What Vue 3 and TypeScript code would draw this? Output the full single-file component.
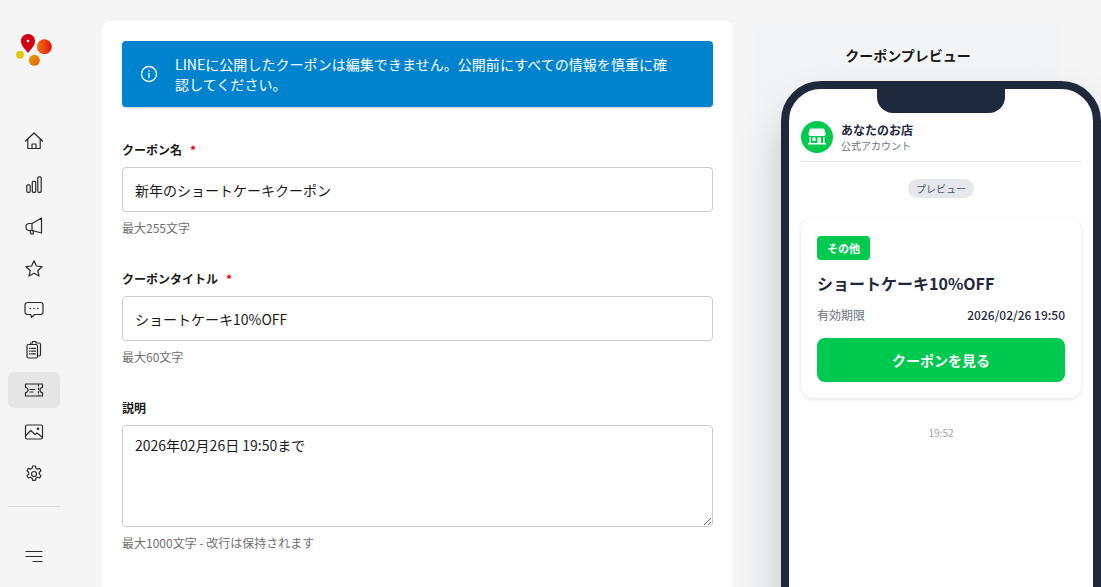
<script setup lang="ts">
// dy nudges each glyph inside its 36px row
const navItems = [
  { id: "home", active: false, dy: 0 },
  { id: "chart", active: false, dy: 2.3 },
  { id: "megaphone", active: false, dy: 3.5 },
  { id: "star", active: false, dy: 4 },
  { id: "chat", active: false, dy: 5 },
  { id: "clipboard", active: false, dy: 0.5 },
  { id: "ticket", active: true, dy: 0 },
  { id: "image", active: false, dy: 0 },
  { id: "gear", active: false, dy: 2 },
];
</script>

<template>
  <div class="page">
    <aside class="sidebar">
      <div class="logo">
        <svg width="40" height="40" viewBox="0 0 40 40">
          <defs>
            <linearGradient id="g1" x1="0" y1="0.5" x2="1" y2="0.5">
              <stop offset="0" stop-color="#ee7a10" />
              <stop offset="1" stop-color="#e3100f" />
            </linearGradient>
            <linearGradient id="g2" x1="0" y1="0" x2="1" y2="1">
              <stop offset="0" stop-color="#e8a008" />
              <stop offset="1" stop-color="#dd6010" />
            </linearGradient>
          </defs>
          <path d="M14 2c-4 0-7 3-7 7 0 4.500 4 8 7 12 3-4 7-7.500 7-12 0-4-3-7-7-7z" fill="#d40016" />
          <circle cx="14" cy="9" r="1.300" fill="#fff" />
          <circle cx="30.300" cy="14.700" r="7.500" fill="url(#g1)" />
          <circle cx="6" cy="22.700" r="4" fill="#e3c90c" />
          <circle cx="20.300" cy="28.300" r="5.500" fill="url(#g2)" />
        </svg>
      </div>
      <nav class="nav">
        <a v-for="item in navItems" :key="item.id" class="nav-item" :class="{ active: item.active }">
          <svg class="icon" viewBox="0 0 20 20">
            <g :transform="`translate(0 ${item.dy})`">
              <template v-if="item.id === 'home'">
                <path d="M1.500 10 10 2l8.500 8M3.800 8v9.500h12.400V8" />
                <path d="M8 17.500V13h4v4.500" />
              </template>
              <template v-else-if="item.id === 'chart'">
                <rect x="2.800" y="9.500" width="3.400" height="7.500" rx="1" />
                <rect x="8.300" y="6" width="3.400" height="11" rx="1" />
                <rect x="13.800" y="1.500" width="3.400" height="15.500" rx="1" />
              </template>
              <template v-else-if="item.id === 'megaphone'">
                <path d="M17.500 0.500v15L8 13H5.500a3.500 3.500 0 0 1 0-7H8z" />
                <path d="M8 6v7M6 13l1 3.500h2.500L9 13.300" />
              </template>
              <template v-else-if="item.id === 'star'">
                <path d="m10 0.800 2.400 5.200 5.600.7-4.200 3.800 1.200 5.500L10 13.300 5 16l1.200-5.500L2 6.700 7.600 6z" />
              </template>
              <template v-else-if="item.id === 'chat'">
                <path d="M3.500 0.500h13A2.500 2.500 0 0 1 19 3v7a2.500 2.500 0 0 1-2.500 2.500h-6L7.500 15.500l-.7-3H3.500A2.500 2.500 0 0 1 1 10V3A2.500 2.500 0 0 1 3.500 0.500z" />
                <path class="dots" d="M6.300 6.500h.1M10 6.500h.1M13.700 6.500h.1" />
              </template>
              <template v-else-if="item.id === 'clipboard'">
                <rect x="3" y="5" width="10.500" height="13.500" rx="1.500" />
                <path d="M6.500 5V3.500h2V2h3.500v1.500h3A1.500 1.500 0 0 1 16.500 5v10a1.500 1.500 0 0 1-3 0" />
                <path d="M5.300 8.800h.8M7.500 8.800h4M5.300 11.600h.8M7.500 11.600h4M5.300 14.400h.8M7.500 14.400h4" />
              </template>
              <template v-else-if="item.id === 'ticket'">
                <path d="M1.500 4h17v3.500a2.500 2.500 0 0 0 0 5V16h-17v-3.500a2.500 2.500 0 0 0 0-5z" />
                <path d="M6 9.500h4.500M6 12h3" />
                <path class="dashes" d="M14.500 4.500v11" />
              </template>
              <template v-else-if="item.id === 'image'">
                <rect x="1.500" y="3" width="17" height="14" rx="1.500" />
                <path d="m1.800 13.500 5-5 4.200 4 2-1.500 5 4" />
                <circle cx="14" cy="6.700" r=".7" />
              </template>
              <template v-else-if="item.id === 'gear'">
                <circle cx="10" cy="9" r="2.500" />
                <path d="M8.600 1h2.800l.5 2.200 1.500.9 2.200-.7 1.400 2.400-1.700 1.500v1.800l1.700 1.500-1.400 2.400-2.200-.7-1.500.9-.5 2.200H8.600l-.5-2.200-1.500-.9-2.200.7L3 10.600l1.700-1.500V7.300L3 5.800l1.400-2.400 2.200.7 1.500-.9z" />
              </template>
            </g>
          </svg>
        </a>
      </nav>
      <div class="side-rule"></div>
      <button class="menu-btn" aria-label="メニュー">
        <svg class="icon" viewBox="0 0 20 20">
          <path d="M2 4.500h16M2 9.500h16M9 14.500h9" />
        </svg>
      </button>
    </aside>

    <main class="form-card">
      <div class="alert">
        <svg class="alert-icon" width="18" height="18" viewBox="0 0 18 18">
          <circle cx="9" cy="9" r="7.500" />
          <path d="M9 8.300v4.200" />
          <path d="M9 5.300v.7" />
        </svg>
        <p>LINEに公開したクーポンは編集できません。公開前にすべての情報を慎重に確認してください。</p>
      </div>

      <div class="field">
        <label>クーポン名<span class="req">*</span></label>
        <input type="text" value="新年のショートケーキクーポン" readonly />
        <small>最大255文字</small>
      </div>
      <div class="field">
        <label>クーポンタイトル<span class="req">*</span></label>
        <input type="text" value="ショートケーキ10%OFF" readonly />
        <small>最大60文字</small>
      </div>
      <div class="field">
        <label>説明</label>
        <textarea readonly>2026年02月26日 19:50まで</textarea>
        <small>最大1000文字 - 改行は保持されます</small>
      </div>
    </main>

    <section class="preview">
      <h3>クーポンプレビュー</h3>
      <div class="phone">
        <div class="notch"></div>
        <div class="chat-head">
          <div class="avatar">
            <svg width="20" height="18" viewBox="0 0 20 18" fill="#fff">
              <path d="M4 0.500h12a1.500 1.500 0 0 1 1.400 1l1.100 4a2 2 0 0 1-1.900 2.500H3.400a2 2 0 0 1-1.900-2.500l1.100-4A1.500 1.500 0 0 1 4 0.500z" />
              <rect x="1" y="15" width="18" height="1.500" />
              <rect x="2.500" y="9" width="1.300" height="6" />
              <rect x="16.200" y="9" width="1.300" height="6" />
              <rect x="5.500" y="9.500" width="3" height="3.500" />
              <rect x="10.500" y="9.500" width="3.500" height="5.500" />
            </svg>
          </div>
          <div>
            <div class="shop">あなたのお店</div>
            <div class="official">公式アカウント</div>
          </div>
        </div>
        <div class="pill-row"><span class="pill">プレビュー</span></div>
        <div class="coupon">
          <span class="badge">その他</span>
          <div class="coupon-title">ショートケーキ10%OFF</div>
          <div class="expiry">
            <span class="expiry-label">有効期限</span>
            <span class="expiry-date">2026/02/26 19:50</span>
          </div>
          <button class="view-btn">クーポンを見る</button>
        </div>
        <div class="time">19:52</div>
      </div>
    </section>
  </div>
</template>

<style scoped>
.page {
  display: flex;
  align-items: flex-start;
  width: 1101px;
  height: 587px;
  overflow: hidden;
  background: #f5f5f5;
  font-family: "Noto Sans CJK JP", "Noto Sans", sans-serif;
  color: #1a1a1a;
}
.sidebar {
  flex: none;
  width: 52px;
  margin: 0 42px 0 8px;
  display: flex;
  flex-direction: column;
  align-items: center;
}
.logo {
  height: 123px;
  width: 100%;
  padding: 32px 0 0 6px;
  box-sizing: border-box;
}
.logo svg {
  display: block;
}
.nav {
  display: flex;
  flex-direction: column;
  gap: 5.500px;
  width: 100%;
}
.nav-item {
  height: 36px;
  border-radius: 6px;
  display: flex;
  align-items: center;
  justify-content: center;
}
.nav-item.active {
  background: #e5e5e5;
}
.icon {
  width: 20px;
  height: 20px;
  overflow: visible;
  fill: none;
  stroke: #2b2b2b;
  stroke-width: 1.200;
  stroke-linejoin: round;
  stroke-linecap: round;
}
.dots {
  stroke-width: 1.600;
}
.dashes {
  stroke-dasharray: 1.500 2;
}
.side-rule {
  width: 100%;
  height: 1px;
  background: #dcdcdc;
  margin-top: 15px;
}
.menu-btn {
  margin-top: 40px;
  padding: 0;
  border: none;
  background: none;
  height: 20px;
}
.form-card {
  flex: none;
  width: 631px;
  height: 640px;
  margin-top: 21px;
  padding: 20px;
  box-sizing: border-box;
  background: #fff;
  border-radius: 8px;
  box-shadow: 0 1px 2px rgba(0, 0, 0, 0.02);
}
.alert {
  display: flex;
  align-items: center;
  gap: 17px;
  height: 66px;
  padding: 0 40px 0 18px;
  box-sizing: border-box;
  background: #0083ce;
  border-radius: 4px;
  color: #fff;
  box-shadow: 0 1px 2px rgba(0, 0, 0, 0.2);
}
.alert p {
  margin: 0;
  font-size: 14px;
  line-height: 20px;
  letter-spacing: 0.05px;
}
.alert-icon {
  flex: none;
  fill: none;
  stroke: #fff;
  stroke-width: 1.300;
  stroke-linecap: round;
}
.field {
  display: flex;
  flex-direction: column;
  height: 129px;
}
.alert + .field {
  margin-top: 26px;
}
.field label {
  flex: none;
  height: 34px;
  padding-top: 7.500px;
  box-sizing: border-box;
  font-size: 12px;
  line-height: 18px;
  font-weight: 700;
}
.req {
  color: #e0000f;
  margin-left: 8px;
}
.field input,
.field textarea {
  display: block;
  width: 100%;
  box-sizing: border-box;
  border: 1px solid #cccccc;
  border-radius: 4px;
  background: #fff;
  color: #1a1a1a;
  font: 400 14px/20px "Noto Sans CJK JP", "Noto Sans", sans-serif;
  padding: 0 12px;
  outline: none;
}
.field input {
  height: 45px;
  flex: none;
}
.field textarea {
  height: 102px;
  flex: none;
  padding-top: 9px;
}
.field small {
  flex: none;
  margin-top: 7px;
  font-size: 12px;
  line-height: 17px;
  color: #707070;
}
.preview {
  flex: none;
  width: 304px;
  height: 640px;
  margin: 22px 0 0 24px;
  padding: 0 24px;
  box-sizing: border-box;
  background: #f3f4f6;
  border-radius: 12px;
}
.preview h3 {
  margin: 0;
  height: 59px;
  padding: 23px 2px 0 0;
  box-sizing: border-box;
  text-align: center;
  font-size: 14px;
  line-height: 20px;
  font-weight: 700;
  color: #1a1a1a;
}
.phone {
  position: relative;
  width: 320px;
  height: 640px;
  box-sizing: border-box;
  border: 8px solid #1e293b;
  border-radius: 40px;
  background: #fff;
  padding: 32px 12px 0;
  box-shadow: 0 25px 50px -10px rgba(0, 0, 0, 0.3);
}
.notch {
  position: absolute;
  top: 0;
  left: 88px;
  width: 128px;
  height: 24px;
  background: #1e293b;
  border-radius: 0 0 16px 16px;
}
.chat-head {
  display: flex;
  align-items: center;
  gap: 8px;
  height: 41px;
  border-bottom: 1px solid #e5e7eb;
  padding-bottom: 8px;
  box-sizing: border-box;
}
.avatar {
  width: 32px;
  height: 32px;
  border-radius: 50%;
  background: #00c950;
  display: flex;
  align-items: center;
  justify-content: center;
}
.shop {
  font-size: 12px;
  line-height: 16px;
  font-weight: 700;
  color: #1e293b;
}
.official {
  margin-top: 1px;
  font-size: 10px;
  line-height: 14px;
  color: #6b7280;
}
.pill-row {
  text-align: center;
  margin-top: 17px;
  height: 20px;
  display: flex;
  justify-content: center;
}
.pill {
  display: block;
  padding: 0 8px;
  height: 19px;
  line-height: 19px;
  font-size: 10px;
  color: #4b5563;
  background: #e5e7eb;
  border-radius: 10px;
}
.coupon {
  margin-top: 19px;
  height: 180px;
  padding: 18px 16px 16px;
  box-sizing: border-box;
  border-radius: 12px;
  background: #fff;
  box-shadow: 0 1px 4px rgba(0, 0, 0, 0.12);
}
.badge {
  display: block;
  width: 53px;
  height: 24px;
  line-height: 24px;
  text-align: center;
  font-size: 11px;
  font-weight: 700;
  color: #fff;
  background: #00c950;
  border-radius: 4px;
}
.coupon-title {
  margin-top: 9px;
  font-size: 16px;
  line-height: 28px;
  font-weight: 700;
  color: #1e293b;
}
.expiry {
  display: flex;
  justify-content: space-between;
  align-items: center;
  margin-top: 7px;
  height: 20px;
  font-size: 12px;
}
.expiry-label {
  color: #6b7280;
}
.expiry-date {
  color: #1e293b;
  font-weight: 500;
}
.view-btn {
  display: block;
  width: 100%;
  height: 44px;
  margin-top: 14px;
  border: none;
  border-radius: 8px;
  background: #00c950;
  color: #fff;
  font: 700 14px "Noto Sans CJK JP", "Noto Sans", sans-serif;
}
.time {
  margin-top: 28px;
  text-align: center;
  font-size: 10px;
  line-height: 14px;
  color: #9ca3af;
}
</style>

<style>
html,
body {
  margin: 0;
  background: #f5f5f5;
  overflow: hidden;
}
</style>
